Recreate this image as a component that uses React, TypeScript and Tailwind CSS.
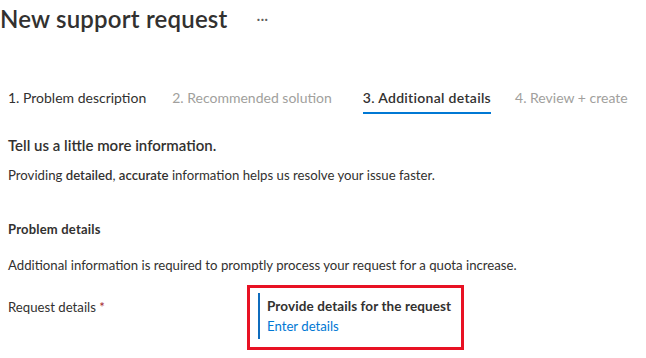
import React from 'react';

const tabs = [
  { label: '1. Problem description', state: 'done' },
  { label: '2. Recommended solution', state: 'disabled' },
  { label: '3. Additional details', state: 'active' },
  { label: '4. Review + create', state: 'disabled' },
];

export default function App() {
  return (
    <div className="h-[358px] w-[646px] overflow-hidden bg-white text-[#323130]" style={{ fontFamily: 'Lato, "Noto Sans", sans-serif' }}>
      <div className="flex items-center h-[38px]">
        <h1 className="text-[24px] font-semibold leading-none tracking-[0.2px]">New support request</h1>
        <span className="ml-[29px] text-[15px] text-[#605e5c] leading-none -mt-[2px]">···</span>
      </div>

      <div className="mt-[46px] flex pl-[8px] text-[14px]">
        {tabs.map((t, i) => (
          <div key={i} className={`flex flex-col ${i === 1 ? 'ml-[26px]' : i === 2 ? 'ml-[31px]' : i === 3 ? 'ml-[24px]' : ''}`}>
            <span
              className={`leading-[28px] ${
                t.state === 'disabled' ? 'text-[#a19f9d]' : 'text-[#323130]'
              } ${t.state === 'active' ? 'font-semibold tracking-[0.3px]' : ''}`}
            >
              {t.label}
            </span>
            <div className={`h-[2px] ${t.state === 'active' ? 'bg-[#0078d4]' : 'bg-transparent'}`} />
          </div>
        ))}
      </div>

      <div className="px-[8px]">
        <h2 className="mt-[21px] text-[15px] font-semibold leading-[20px]">Tell us a little more information.</h2>
        <p className="mt-[11px] text-[13.2px] leading-[18px]">
          Providing <span className="font-semibold">detailed</span>, <span className="font-semibold">accurate</span> information helps us resolve your issue faster.
        </p>

        <h3 className="mt-[36px] text-[13px] font-bold leading-[18px] tracking-[0.2px]">Problem details</h3>
        <p className="mt-[18px] text-[13.2px] leading-[18px]">Additional information is required to promptly process your request for a quota increase.</p>

        <div className="mt-[11px] flex">
          <div className="w-[239px] pt-[13px] text-[13.2px] leading-[18px]">
            Request details <span className="text-[#a4262c]">*</span>
          </div>
          <div className="border-[3px] border-[#e81123] w-[217px] h-[65px] pl-[8px] pt-[5px]">
            <div className="flex border-l-[2px] border-[#0f6cbd] pl-[7px] flex-col h-[46px]">
              <span className="text-[13.5px] font-bold leading-[20px] mt-[3px] tracking-[0.1px] whitespace-nowrap">Provide details for the request</span>
              <span className="text-[13.2px] leading-[20px] text-[#0078d4]">Enter details</span>
            </div>
          </div>
        </div>
      </div>
    </div>
  );
}
